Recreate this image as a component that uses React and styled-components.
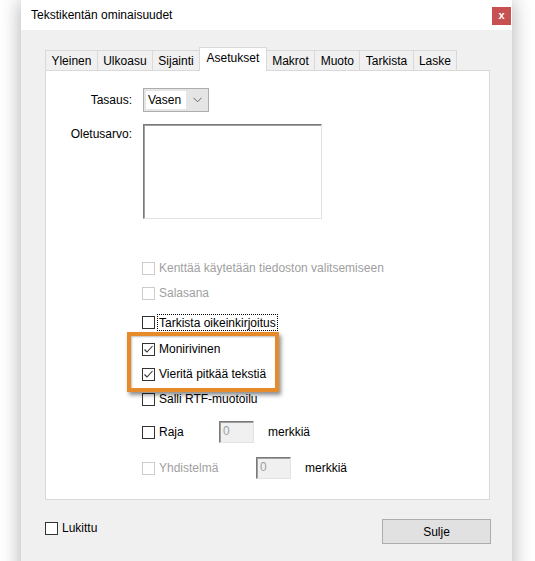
import React from "react";
import styled, { createGlobalStyle } from "styled-components";

const Global = createGlobalStyle`
  html, body { margin: 0; padding: 0; background: #ffffff; overflow: hidden; }
  body { font-family: "Segoe UI", "Liberation Sans", Arial, sans-serif; font-size: 12px; color: #000; }
`;

const Page = styled.div`
  width: 535px;
  height: 561px;
  padding-left: 21px;
  box-sizing: border-box;
  overflow: hidden;
`;

const Window = styled.div`
  width: 491px;
  height: 590px;
  background: #f0f0f0;
  box-shadow: 0 0 20px rgba(0, 0, 0, 0.32);
  display: flex;
  flex-direction: column;
`;

const TitleBar = styled.div`
  height: 30px;
  background: #ffffff;
  display: flex;
  align-items: flex-start;
  justify-content: space-between;
`;

const Title = styled.div`
  padding-left: 10px;
  line-height: 31px;
  font-size: 12px;
`;

const CloseBtn = styled.div`
  margin-top: 7px;
  margin-right: 1px;
  width: 19px;
  height: 18px;
  background: #c75050;
  color: #fff;
  font-size: 11px;
  font-weight: bold;
  display: flex;
  align-items: center;
  justify-content: center;
  line-height: 1;
  padding-bottom: 2px;
  box-sizing: border-box;
`;

const Body = styled.div`
  padding: 17px 22px 0 24px;
  display: flex;
  flex-direction: column;
`;

const TabStrip = styled.div`
  display: flex;
  align-items: flex-end;
  height: 23px;
  position: relative;
  z-index: 1;
`;

const Tab = styled.div`
  height: ${(p) => (p.$active ? 24 : 20)}px;
  padding: 0 ${(p) => (p.$active ? 6.5 : 5.4)}px ${(p) => (p.$active ? 3 : 0)}px;
  margin-left: ${(p) => (p.$first ? 0 : -1)}px;
  margin-bottom: ${(p) => (p.$active ? -1 : 0)}px;
  border: 1px solid #d9d9d9;
  border-bottom: none;
  background: ${(p) => (p.$active ? "#ffffff" : "#f0f0f0")};
  display: flex;
  align-items: center;
  box-sizing: border-box;
  white-space: nowrap;
  position: relative;
  z-index: ${(p) => (p.$active ? 2 : 1)};
`;

const Panel = styled.div`
  position: relative;
  height: 430px;
  box-sizing: border-box;
  border: 1px solid #d9d9d9;
  background: #ffffff;
  padding: 17px 0 0 0;
  display: flex;
  flex-direction: column;
`;

const FieldRow = styled.div`
  display: grid;
  grid-template-columns: 86px auto;
  column-gap: 11px;
  align-items: ${(p) => (p.$top ? "start" : "center")};
  margin-top: ${(p) => p.$mt || 0}px;
`;

const FieldLabel = styled.div`
  text-align: right;
  padding-top: ${(p) => (p.$top ? 3 : 0)}px;
`;

const Select = styled.div`
  width: 66px;
  height: 24px;
  box-sizing: border-box;
  border: 1px solid #adadad;
  background: #e5e5e5;
  display: flex;
  align-items: center;
  justify-content: space-between;
  padding: 2px 6px 2px 2px;
`;

const SelectValue = styled.div`
  background: #ffffff;
  height: 100%;
  display: flex;
  align-items: center;
  padding: 0 5px 0 2px;
`;

const TextArea = styled.div`
  width: 179px;
  height: 95px;
  box-sizing: border-box;
  border: 1px solid;
  border-color: #7a7a7a #e3e3e3 #e3e3e3 #7a7a7a;
  box-shadow: inset 1px 1px 0 #a0a0a0;
  background: #ffffff;
`;

const Options = styled.div`
  display: flex;
  flex-direction: column;
  padding-left: 96px;
`;

const Row = styled.div`
  display: flex;
  align-items: center;
  height: ${(p) => p.$h || 16}px;
  margin-top: ${(p) => p.$mt || 0}px;
  color: ${(p) => (p.$disabled ? "#a0a0a0" : "#000000")};
  white-space: nowrap;
`;

const Box = styled.span`
  width: 13px;
  height: 13px;
  box-sizing: border-box;
  border: 1px solid ${(p) => (p.$disabled ? "#cccccc" : "#333333")};
  background: #ffffff;
  display: inline-flex;
  align-items: center;
  justify-content: center;
  flex: none;
`;

const Label = styled.span`
  margin-left: ${(p) => (p.$focus ? 2 : 4)}px;
  padding: ${(p) => (p.$focus ? "1px 1px 0 1px" : "0")};
  border: ${(p) => (p.$focus ? "1px dotted #000" : "none")};
  width: ${(p) => (p.$w ? p.$w + "px" : "auto")};
  line-height: 14px;
`;

const SmallInput = styled.div`
  width: 35px;
  height: 22px;
  box-sizing: border-box;
  border: 1px solid;
  border-color: #7a7a7a #e3e3e3 #e3e3e3 #7a7a7a;
  box-shadow: inset 1px 1px 0 #a0a0a0;
  background: #f0f0f0;
  color: #a0a0a0;
  padding: 2px 0 0 3px;
  line-height: 15px;
`;

const Unit = styled.span`
  margin-left: 14px;
  color: #000;
`;

const Highlight = styled.div`
  position: absolute;
  left: 81px;
  top: 261px;
  width: 152px;
  height: 60px;
  box-sizing: border-box;
  border: 4px solid #e58b2b;
  box-shadow: 2px 3px 4px rgba(0, 0, 0, 0.45), inset 1px 1px 2px rgba(0, 0, 0, 0.25);
  pointer-events: none;
`;

const Footer = styled.div`
  display: flex;
  align-items: flex-start;
  justify-content: space-between;
  margin-top: 19px;
`;

const FooterCheck = styled(Row)`
  margin-top: 1px;
`;

const Button = styled.div`
  width: 109px;
  height: 25px;
  box-sizing: border-box;
  border: 1px solid #adadad;
  background: #e1e1e1;
  display: flex;
  align-items: center;
  justify-content: center;
  margin-right: -1px;
`;

const Check = () => (
  <svg width="11" height="11" viewBox="0 0 11 11">
    <polyline points="1.5,5.5 4,8 9.5,2" fill="none" stroke="#333" strokeWidth="1.1" />
  </svg>
);

const Chevron = () => (
  <svg width="9" height="6" viewBox="0 0 9 6">
    <polyline points="0.5,0.8 4.5,4.8 8.5,0.8" fill="none" stroke="#666" strokeWidth="1" />
  </svg>
);

const CheckBox = ({ checked, disabled }) => (
  <Box $disabled={disabled}>{checked ? <Check /> : null}</Box>
);

const tabs = ["Yleinen", "Ulkoasu", "Sijainti", "Asetukset", "Makrot", "Muoto", "Tarkista", "Laske"];

export default function App() {
  return (
    <Page>
      <Global />
      <Window>
        <TitleBar>
          <Title>Tekstikentän ominaisuudet</Title>
          <CloseBtn>x</CloseBtn>
        </TitleBar>
        <Body>
          <TabStrip>
            {tabs.map((t, i) => (
              <Tab key={t} $first={i === 0} $active={t === "Asetukset"}>
                {t}
              </Tab>
            ))}
          </TabStrip>
          <Panel>
            <FieldRow>
              <FieldLabel>Tasaus:</FieldLabel>
              <Select>
                <SelectValue>Vasen</SelectValue>
                <Chevron />
              </Select>
            </FieldRow>
            <FieldRow $top $mt={12}>
              <FieldLabel $top>Oletusarvo:</FieldLabel>
              <TextArea />
            </FieldRow>
            <Options>
              <Row $mt={41} $disabled>
                <CheckBox disabled />
                <Label>Kenttää käytetään tiedoston valitsemiseen</Label>
              </Row>
              <Row $mt={9} $disabled>
                <CheckBox disabled />
                <Label>Salasana</Label>
              </Row>
              <Row $mt={13}>
                <CheckBox />
                <Label $focus>Tarkista oikeinkirjoitus</Label>
              </Row>
              <Row $mt={11}>
                <CheckBox checked />
                <Label>Monirivinen</Label>
              </Row>
              <Row $mt={9}>
                <CheckBox checked />
                <Label>Vieritä pitkää tekstiä</Label>
              </Row>
              <Row $mt={9}>
                <CheckBox />
                <Label>Salli RTF-muotoilu</Label>
              </Row>
              <Row $mt={14} $h={22}>
                <CheckBox />
                <Label $w={60}>Raja</Label>
                <SmallInput>0</SmallInput>
                <Unit>merkkiä</Unit>
              </Row>
              <Row $mt={14} $h={22} $disabled>
                <CheckBox disabled />
                <Label $w={97}>Yhdistelmä</Label>
                <SmallInput>0</SmallInput>
                <Unit>merkkiä</Unit>
              </Row>
            </Options>
            <Highlight />
          </Panel>
          <Footer>
            <FooterCheck>
              <CheckBox />
              <Label>Lukittu</Label>
            </FooterCheck>
            <Button>Sulje</Button>
          </Footer>
        </Body>
      </Window>
    </Page>
  );
}
